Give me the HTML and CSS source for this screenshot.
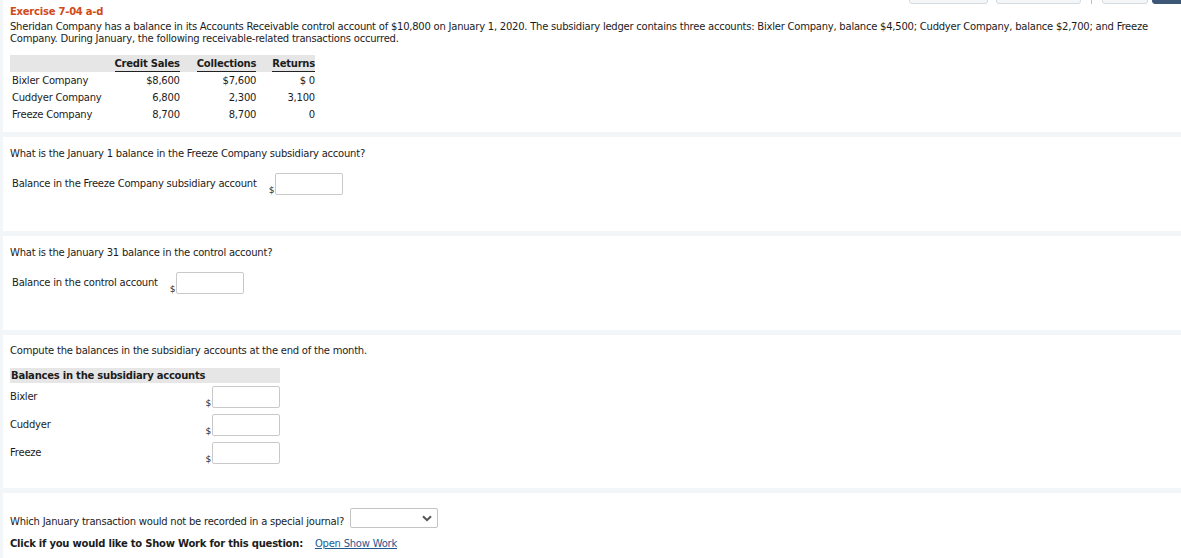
FILE: index.html
```html
<!DOCTYPE html>
<html>
<head>
<meta charset="utf-8">
<link rel="stylesheet" href="styles.css">
</head>
<body>
<div class="page">
  <div class="toolbar">
    <span class="tbtn w79"></span>
    <span class="tbtn w85"></span>
    <span class="tdiv"></span>
    <span class="tbtn w46"></span>
    <span class="tbtn dark"></span>
  </div>
  <section class="sec intro">
    <h1 class="title">Exercise 7-04 a-d</h1>
    <p class="para">Sheridan Company has a balance in its Accounts Receivable control account of $10,800 on January 1, 2020. The subsidiary ledger contains three accounts: Bixler Company, balance $4,500; Cuddyer Company, balance $2,700; and Freeze Company. During January, the following receivable-related transactions occurred.</p>
    <table class="data">
      <thead>
        <tr><th class="name"></th><th><span>Credit Sales</span></th><th><span>Collections</span></th><th><span>Returns</span></th></tr>
      </thead>
      <tbody>
        <tr><td class="name">Bixler Company</td><td>$8,600</td><td>$7,600</td><td>$ 0</td></tr>
        <tr><td class="name">Cuddyer Company</td><td>6,800</td><td>2,300</td><td>3,100</td></tr>
        <tr><td class="name">Freeze Company</td><td>8,700</td><td>8,700</td><td>0</td></tr>
      </tbody>
    </table>
  </section>
  <section class="sec s2">
    <p class="q">What is the January 1 balance in the Freeze Company subsidiary account?</p>
    <div class="field">
      <span class="lbl">Balance in the Freeze Company subsidiary account</span>
      <span class="dollar">$</span><span class="box w68"></span>
    </div>
  </section>
  <section class="sec s3">
    <p class="q">What is the January 31 balance in the control account?</p>
    <div class="field">
      <span class="lbl">Balance in the control account</span>
      <span class="dollar">$</span><span class="box w68"></span>
    </div>
  </section>
  <section class="sec s4">
    <p class="q q4">Compute the balances in the subsidiary accounts at the end of the month.</p>
    <div class="grid">
      <div class="ghead">Balances in the subsidiary accounts</div>
      <div class="grow"><span class="gname">Bixler</span><span class="dollar">$</span><span class="box w68"></span></div>
      <div class="grow"><span class="gname">Cuddyer</span><span class="dollar">$</span><span class="box w68"></span></div>
      <div class="grow"><span class="gname">Freeze</span><span class="dollar">$</span><span class="box w68"></span></div>
    </div>
  </section>
  <section class="sec s5">
    <div class="selrow">
      <span>Which January transaction would not be recorded in a special journal?</span>
      <span class="select"><svg width="10" height="7" viewBox="0 0 10 7"><path d="M1 1.2 L5 5.2 L9 1.2" fill="none" stroke="#555" stroke-width="2"/></svg></span>
    </div>
    <div class="show"><b>Click if you would like to Show Work for this question:</b><a class="link">Open Show Work</a></div>
  </section>
</div>
</body>
</html>
```
FILE: styles.css
```css
html, body { margin: 0; padding: 0; }
body {
  background: #f3f6f9;
  font-family: "DejaVu Sans", Verdana, sans-serif;
  font-size: 10px;
  letter-spacing: -0.23px;
  color: #1c1c1c;
  width: 1181px;
  height: 558px;
  overflow: hidden;
}
.page { margin-left: 3px; }
.toolbar {
  height: 4px;
  background: #fff;
  display: flex;
  justify-content: flex-end;
  overflow: hidden;
}
.tbtn {
  height: 10px;
  margin-top: -6px;
  border: 1px solid #d3dbe3;
  border-radius: 3px;
  background: #f4f6f8;
  box-sizing: border-box;
  flex: none;
}
.w79 { width: 79px; margin-right: 8px; }
.w85 { width: 85px; margin-right: 10px; }
.tdiv { width: 1px; height: 6px; background: #b8bec4; margin-right: 10px; flex: none; }
.w46 { width: 46px; margin-right: 4px; }
.dark { width: 32px; background: #3d5876; border-color: #3d5876; margin-right: -3px; }

.sec { background: #fff; padding: 0 7px; }
.intro { height: 128px; }
.s2 { margin-top: 5px; height: 94px; }
.s3 { margin-top: 5px; height: 94px; }
.s4 { margin-top: 5px; height: 153px; }
.s5 { margin-top: 5px; height: 70px; }

.title {
  margin: 0;
  padding-top: 1px;
  font-size: 10px;
  font-weight: bold;
  color: #d14a1a;
  line-height: 13px;
}
.para {
  margin: 3px 0 0;
  line-height: 12px;
  width: 1160px;
}
.data {
  border-collapse: collapse;
  margin-top: 10px;
}
.data th {
  background: #e6e6e6;
  font-weight: bold;
  text-align: right;
  height: 17px;
  padding: 0 0 0 13px;
  vertical-align: bottom;
  white-space: nowrap;
}
.data th span {
  display: inline-block;
  border-bottom: 1px solid #222;
  line-height: 15px;
}
.data th.name { padding: 0; }
.data td {
  text-align: right;
  height: 17px;
  padding: 0 0 0 13px;
  line-height: 17px;
  white-space: nowrap;
}
.data th:nth-child(3), .data td:nth-child(3) { padding-left: 17px; }
.data th:nth-child(4), .data td:nth-child(4) { padding-left: 16px; }
.data td.name { text-align: left; padding-left: 2px; padding-right: 0; }

.q { margin: 0; padding-top: 11px; line-height: 12px; }
.q4 { padding-top: 10px; }
.field {
  display: flex;
  align-items: flex-end;
  margin-top: 13px;
  padding-left: 2px;
}
.lbl { align-self: flex-start; margin-top: 5px; margin-right: 12px; line-height: 12px; }
.dollar { font-size: 9px; line-height: 10px; margin-right: 1px; }
.box {
  display: inline-block;
  height: 22px;
  border: 1px solid #c9c9c9;
  border-radius: 2px;
  box-sizing: border-box;
  background: #fff;
  flex: none;
}
.w68 { width: 68px; }

.grid { width: 270px; margin-top: 11px; }
.ghead {
  background: #e6e6e6;
  font-weight: bold;
  height: 15px;
  line-height: 15px;
  padding-left: 1px;
}
.grow {
  display: flex;
  align-items: flex-end;
  height: 22px;
  margin-top: 6px;
}
.ghead + .grow { margin-top: 3px; }
.gname { align-self: flex-start; margin-top: 5px; flex: 1; }

.selrow {
  display: flex;
  align-items: flex-end;
  padding-top: 15px;
}
.selrow span:first-child { line-height: 12px; margin-bottom: 0; }
.select {
  width: 88px;
  height: 20px;
  border: 1px solid #c4c4c4;
  border-radius: 2px;
  box-sizing: border-box;
  margin-left: 6px;
  display: flex;
  justify-content: flex-end;
  align-items: center;
  padding-right: 5px;
}
.show { margin-top: 10px; line-height: 12px; }
.show b { font-weight: bold; }
.link { color: #1f5a8f; text-decoration: underline; margin-left: 12px; cursor: pointer; }
```
